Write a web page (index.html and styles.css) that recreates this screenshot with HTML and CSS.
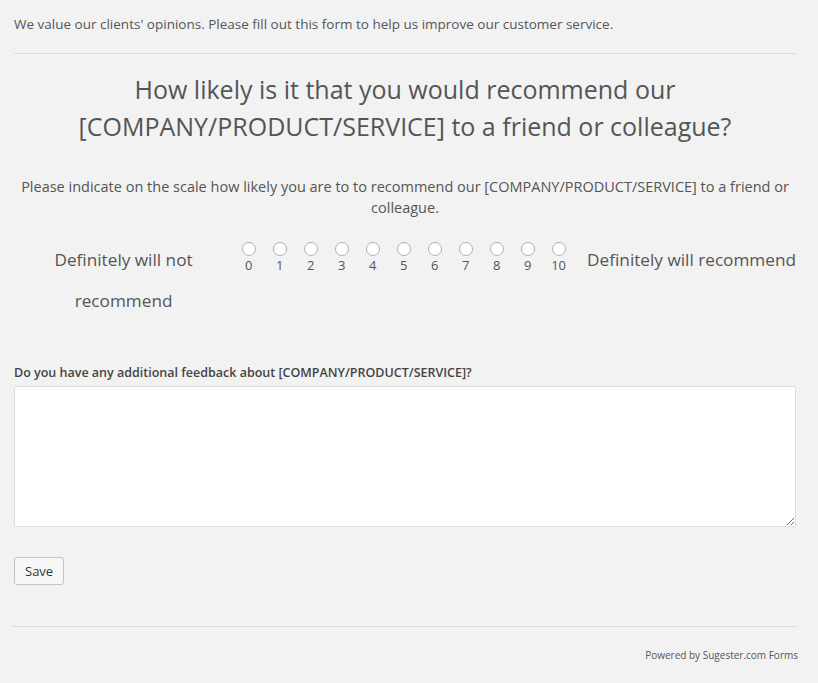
FILE: index.html
```html
<!DOCTYPE html>
<html>
<head>
<meta charset="utf-8">
<link rel="stylesheet" href="styles.css">
</head>
<body>
<div class="page">
  <p class="intro">We value our clients' opinions. Please fill out this form to help us improve our customer service.</p>
  <hr class="rule">
  <h1 class="question">How likely is it that you would recommend our [COMPANY/PRODUCT/SERVICE] to a friend or colleague?</h1>
  <p class="hint">Please indicate on the scale how likely you are to to recommend our [COMPANY/PRODUCT/SERVICE] to a friend or colleague.</p>
  <div class="scale">
    <div class="scale-low">Definitely will not recommend</div>
    <div class="scale-opts">
      <label class="opt"><span class="radio"></span><span class="num">0</span></label>
      <label class="opt"><span class="radio"></span><span class="num">1</span></label>
      <label class="opt"><span class="radio"></span><span class="num">2</span></label>
      <label class="opt"><span class="radio"></span><span class="num">3</span></label>
      <label class="opt"><span class="radio"></span><span class="num">4</span></label>
      <label class="opt"><span class="radio"></span><span class="num">5</span></label>
      <label class="opt"><span class="radio"></span><span class="num">6</span></label>
      <label class="opt"><span class="radio"></span><span class="num">7</span></label>
      <label class="opt"><span class="radio"></span><span class="num">8</span></label>
      <label class="opt"><span class="radio"></span><span class="num">9</span></label>
      <label class="opt"><span class="radio"></span><span class="num">10</span></label>
    </div>
    <div class="scale-high">Definitely will recommend</div>
  </div>
  <div class="field">
    <label class="field-label">Do you have any additional feedback about [COMPANY/PRODUCT/SERVICE]?</label>
    <textarea class="feedback"></textarea>
  </div>
  <button class="save" type="button">Save</button>
</div>
<footer class="footer">
  <hr class="rule-foot">
  <p class="powered">Powered by Sugester.com Forms</p>
</footer>
</body>
</html>
```
FILE: styles.css
```css
html, body {
  margin: 0;
  padding: 0;
  background: #f2f2f2;
}
body {
  font-family: "Open Sans", "Liberation Sans", sans-serif;
  color: #555;
}
.page {
  padding: 0 22px 0 14px;
}
.intro {
  margin: 0;
  padding-top: 14px;
  font-size: 13.5px;
  line-height: 20px;
  color: #555;
}
.rule {
  border: 0;
  border-top: 1px solid #dcdcdc;
  margin: 19px 0 0 0;
}
.question {
  margin: 17px 0 0 0;
  text-align: center;
  font-size: 25px;
  font-weight: 400;
  line-height: 37px;
  color: #555;
}
.hint {
  margin: 31px 0 0 0;
  text-align: center;
  font-size: 14.5px;
  line-height: 21px;
  color: #555;
}
.scale {
  display: flex;
  align-items: flex-start;
  margin-top: 24px;
}
.scale-low {
  width: 220px;
  text-align: center;
  font-size: 17.2px;
  line-height: 41px;
  margin-top: -3px;
}
.scale-opts {
  display: flex;
}
.opt {
  width: 31px;
  display: flex;
  flex-direction: column;
  align-items: center;
}
.radio {
  width: 12px;
  height: 12px;
  border: 1px solid #b0b0b0;
  border-radius: 50%;
  background: #fff;
}
.num {
  font-size: 13px;
  line-height: 18px;
  color: #555;
}
.scale-high {
  margin-left: 13px;
  font-size: 17.2px;
  line-height: 41px;
  margin-top: -3px;
  white-space: nowrap;
}
.field {
  margin-top: 43px;
}
.field-label {
  display: block;
  font-size: 12.5px;
  font-weight: 600;
  line-height: 17px;
  color: #444;
}
.feedback {
  display: block;
  box-sizing: border-box;
  width: 100%;
  height: 141px;
  margin-top: 5px;
  border: 1px solid #ddd;
  border-radius: 2px;
  background: #fff;
}
.save {
  margin-top: 30px;
  height: 28px;
  padding: 0 10px;
  font-family: "Open Sans", "Liberation Sans", sans-serif;
  font-size: 13px;
  color: #333;
  background: #f7f7f7;
  border: 1px solid #c4c4c4;
  border-radius: 3px;
}
.footer {
  padding: 0 20px 0 12px;
}
.rule-foot {
  border: 0;
  border-top: 1px solid #dcdcdc;
  margin: 41px 0 0 0;
}
.powered {
  margin: 20px 0 0 0;
  text-align: right;
  font-size: 10px;
  line-height: 16px;
  color: #555;
}
```
